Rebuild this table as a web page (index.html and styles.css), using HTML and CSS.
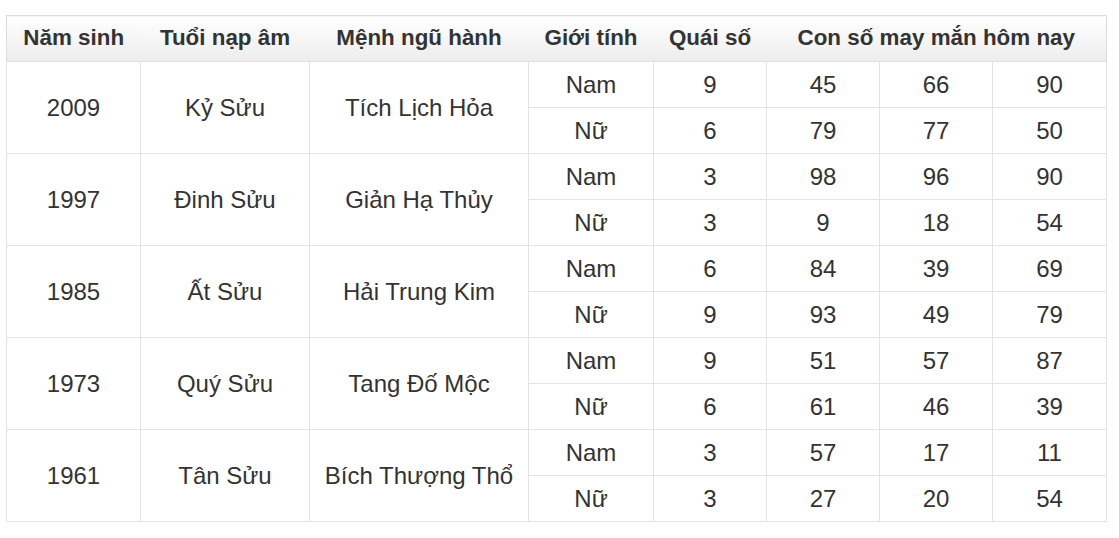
FILE: index.html
```html
<!DOCTYPE html>
<html lang="vi">
<head>
<meta charset="utf-8">
<link rel="stylesheet" href="styles.css">
</head>
<body>
<table class="lucky">
<colgroup>
<col class="c1"><col class="c2"><col class="c3"><col class="c4"><col class="c5"><col class="c6"><col class="c7"><col class="c8">
</colgroup>
<thead>
<tr><th>Năm sinh</th><th>Tuổi nạp âm</th><th>Mệnh ngũ hành</th><th>Giới tính</th><th>Quái số</th><th colspan="3">Con số may mắn hôm nay</th></tr>
</thead>
<tbody>
<tr><td rowspan="2">2009</td><td rowspan="2">Kỷ Sửu</td><td rowspan="2">Tích Lịch Hỏa</td><td>Nam</td><td>9</td><td>45</td><td>66</td><td>90</td></tr>
<tr><td>Nữ</td><td>6</td><td>79</td><td>77</td><td>50</td></tr>
<tr><td rowspan="2">1997</td><td rowspan="2">Đinh Sửu</td><td rowspan="2">Giản Hạ Thủy</td><td>Nam</td><td>3</td><td>98</td><td>96</td><td>90</td></tr>
<tr><td>Nữ</td><td>3</td><td>9</td><td>18</td><td>54</td></tr>
<tr><td rowspan="2">1985</td><td rowspan="2">Ất Sửu</td><td rowspan="2">Hải Trung Kim</td><td>Nam</td><td>6</td><td>84</td><td>39</td><td>69</td></tr>
<tr><td>Nữ</td><td>9</td><td>93</td><td>49</td><td>79</td></tr>
<tr><td rowspan="2">1973</td><td rowspan="2">Quý Sửu</td><td rowspan="2">Tang Đố Mộc</td><td>Nam</td><td>9</td><td>51</td><td>57</td><td>87</td></tr>
<tr><td>Nữ</td><td>6</td><td>61</td><td>46</td><td>39</td></tr>
<tr><td rowspan="2">1961</td><td rowspan="2">Tân Sửu</td><td rowspan="2">Bích Thượng Thổ</td><td>Nam</td><td>3</td><td>57</td><td>17</td><td>11</td></tr>
<tr><td>Nữ</td><td>3</td><td>27</td><td>20</td><td>54</td></tr>
</tbody>
</table>
</body>
</html>
```

FILE: styles.css
```css
html, body {
  margin: 0;
  padding: 0;
  background: #fff;
}
body {
  padding: 15px 0 0 6px;
  font-family: "Liberation Sans", Arial, sans-serif;
  color: #333;
}
.lucky {
  border-collapse: collapse;
  table-layout: fixed;
  width: 1101px;
}
.c1 { width: 134px; }
.c2 { width: 169px; }
.c3 { width: 219px; }
.c4 { width: 125px; }
.c5 { width: 113px; }
.c6 { width: 113px; }
.c7 { width: 113px; }
.c8 { width: 114px; }
.lucky th {
  font-size: 22.4px;
  font-weight: bold;
  height: 43px;
  padding: 0 0 2px;
  text-align: center;
  vertical-align: middle;
  background: linear-gradient(to bottom, #ffffff 0%, #ececec 100%);
  border-top: 1px solid #dcdcdc;
  border-bottom: 1px solid #dedede;
  white-space: nowrap;
}
.lucky th:first-child { border-left: 1px solid #dcdcdc; }
.lucky th:last-child { border-right: 1px solid #dcdcdc; }
.lucky td {
  font-size: 24px;
  height: 45px;
  padding: 0;
  text-align: center;
  vertical-align: middle;
  border: 1px solid #e3e3e3;
  white-space: nowrap;
}
```
